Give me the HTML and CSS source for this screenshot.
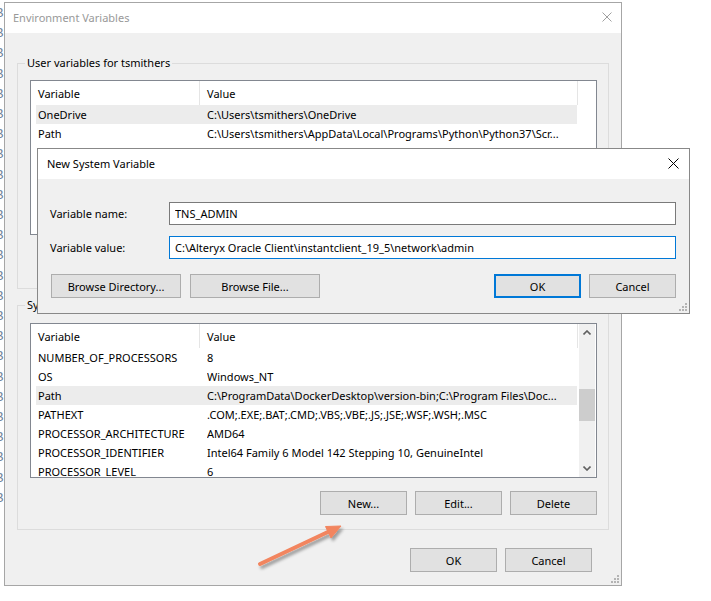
FILE: index.html
```html
<!DOCTYPE html>
<html lang="en">
<head>
    <meta charset="UTF-8">
    <meta name="viewport" content="width=device-width, initial-scale=1.0">
    <title>Environment Variables</title>
    <link rel="stylesheet" href="styles.css">
</head>
<body>

    <div class="desktop">
        <!-- edge of the window lying behind -->
        <div class="backdrop">
            <span>B</span><span>B</span><span>B</span><span>B</span><span>B</span>
            <span>B</span><span>B</span><span>B</span><span>B</span><span>B</span>
            <span>B</span><span>B</span><span>B</span><span>B</span><span>B</span>
            <span>B</span><span>B</span><span>B</span><span>B</span><span>B</span>
            <span>B</span><span>B</span><span>B</span><span>B</span><span>B</span>
        </div>

        <div class="window">
            <div class="titlebar">
                <span class="title">Environment Variables</span>
                <svg class="close inactive" width="10" height="10" viewBox="0 0 10 10">
                    <path d="M0.5 0.5 L9.5 9.5 M9.5 0.5 L0.5 9.5" />
                </svg>
            </div>

            <div class="window-body">
                <div class="group user-group">
                    <div class="group-label">User variables for tsmithers</div>
                    <div class="listbox">
                        <div class="list">
                            <div class="list-head">
                                <div class="head-cell name-col">Variable</div>
                                <div class="head-cell">Value</div>
                            </div>
                            <div class="row selected"><span>OneDrive</span><span>C:\Users\tsmithers\OneDrive</span></div>
                            <div class="row"><span>Path</span><span>C:\Users\tsmithers\AppData\Local\Programs\Python\Python37\Scr...</span></div>
                        </div>
                        <div class="scroll-blank"></div>
                    </div>
                </div>

                <div class="group sys-group">
                    <div class="group-label">System variables</div>
                    <div class="listbox">
                        <div class="list">
                            <div class="list-head">
                                <div class="head-cell name-col">Variable</div>
                                <div class="head-cell">Value</div>
                            </div>
                            <div class="row"><span>NUMBER_OF_PROCESSORS</span><span>8</span></div>
                            <div class="row"><span>OS</span><span>Windows_NT</span></div>
                            <div class="row selected"><span>Path</span><span>C:\ProgramData\DockerDesktop\version-bin;C:\Program Files\Doc...</span></div>
                            <div class="row"><span>PATHEXT</span><span>.COM;.EXE;.BAT;.CMD;.VBS;.VBE;.JS;.JSE;.WSF;.WSH;.MSC</span></div>
                            <div class="row"><span>PROCESSOR_ARCHITECTURE</span><span>AMD64</span></div>
                            <div class="row"><span>PROCESSOR_IDENTIFIER</span><span>Intel64 Family 6 Model 142 Stepping 10, GenuineIntel</span></div>
                            <div class="row"><span>PROCESSOR_LEVEL</span><span>6</span></div>
                        </div>
                        <div class="scrollbar">
                            <div class="scroll-btn">
                                <svg width="8" height="5" viewBox="0 0 8 5"><polyline points="0.5,4.5 4,1 7.5,4.5" /></svg>
                            </div>
                            <div class="scroll-track"><div class="thumb"></div></div>
                            <div class="scroll-btn">
                                <svg width="8" height="5" viewBox="0 0 8 5"><polyline points="0.5,0.5 4,4 7.5,0.5" /></svg>
                            </div>
                        </div>
                    </div>
                    <div class="button-row">
                        <button>New...</button>
                        <button>Edit...</button>
                        <button>Delete</button>
                    </div>
                </div>

                <div class="button-row footer">
                    <button>OK</button>
                    <button>Cancel</button>
                </div>
            </div>
            <svg class="grip" width="8" height="8" viewBox="0 0 8 8">
                <rect x="6" y="0" width="2" height="2" />
                <rect x="3" y="3" width="2" height="2" /><rect x="6" y="3" width="2" height="2" />
                <rect x="0" y="6" width="2" height="2" /><rect x="3" y="6" width="2" height="2" /><rect x="6" y="6" width="2" height="2" />
            </svg>
        </div>

        <!-- New System Variable dialog on top -->
        <div class="dialog">
            <div class="titlebar dialog-titlebar">
                <span class="dialog-title">New System Variable</span>
                <svg class="close" width="11" height="11" viewBox="0 0 11 11">
                    <path d="M0.5 0.5 L10.5 10.5 M10.5 0.5 L0.5 10.5" />
                </svg>
            </div>
            <div class="dialog-body">
                <div class="field-grid">
                    <label for="varName">Variable name:</label>
                    <input id="varName" type="text" value="TNS_ADMIN">
                    <label for="varValue">Variable value:</label>
                    <input id="varValue" class="focused" type="text" value="C:\Alteryx Oracle Client\instantclient_19_5\network\admin">
                </div>
                <div class="dialog-buttons">
                    <button class="wide">Browse Directory...</button>
                    <button class="wide">Browse File...</button>
                    <span class="spacer"></span>
                    <button class="default">OK</button>
                    <button>Cancel</button>
                </div>
            </div>
            <svg class="grip" width="8" height="8" viewBox="0 0 8 8">
                <rect x="6" y="0" width="2" height="2" />
                <rect x="3" y="3" width="2" height="2" /><rect x="6" y="3" width="2" height="2" />
                <rect x="0" y="6" width="2" height="2" /><rect x="3" y="6" width="2" height="2" /><rect x="6" y="6" width="2" height="2" />
            </svg>
        </div>

        <svg class="pointer" width="711" height="601" viewBox="0 0 711 601">
            <defs>
                <filter id="shadow" x="-20%" y="-20%" width="140%" height="140%">
                    <feDropShadow dx="2" dy="3" stdDeviation="1.6" flood-color="#000" flood-opacity="0.35" />
                </filter>
            </defs>
            <g filter="url(#shadow)" fill="#f2855f" stroke="#f2855f">
                <line x1="260" y1="564" x2="330" y2="531" stroke-width="4" stroke-linecap="round" />
                <polygon points="341,526 331,538 325.5,526.5" stroke-width="1" stroke-linejoin="round" />
            </g>
        </svg>
    </div>

</body>
</html>
```

FILE: styles.css
```css
* {
    box-sizing: border-box;
}
body {
    margin: 0;
    background: #fff;
    font-family: "Noto Sans", "Segoe UI", sans-serif;
    font-size: 11px;
    color: #000;
}
.desktop {
    position: relative;
    display: flex;
    align-items: flex-start;
    width: 711px;
    height: 601px;
    overflow: hidden;
}
.backdrop {
    width: 4px;
    overflow: hidden;
    padding-top: 3px;
    color: #6d7f98;
    font: 13px/20.2px "Liberation Sans", sans-serif;
}
.backdrop span {
    display: block;
    margin-left: -5px;
}

/* outer window */
.window {
    position: relative;
    margin-top: 2px;
    width: 618px;
    height: 584px;
    border: 1px solid #a6a6a6;
    background: #f0f0f0;
}
.titlebar {
    height: 30px;
    background: #fff;
    display: flex;
    align-items: center;
    justify-content: space-between;
    padding: 0 9px 2px 8px;
}
.title {
    color: #999;
}
.close path {
    stroke: #000;
    stroke-width: 1;
    fill: none;
}
.close.inactive path {
    stroke: #a0a0a0;
}
.window-body {
    padding: 30px 12px 0;
}

/* group boxes */
.group {
    border: 1px solid #dcdcdc;
    padding: 0 11px 0 12px;
}
.group-label {
    width: fit-content;
    margin: -8px 0 0 -5px;
    padding: 0 2px;
    line-height: 14px;
    background: #f0f0f0;
}
.user-group {
    height: 226px;
}
.user-group .listbox {
    margin-top: 10px;
}
.sys-group {
    height: 225px;
    margin-top: 16px;
}
.sys-group .listbox {
    margin-top: 11px;
}

/* list views */
.listbox {
    display: flex;
    height: 155px;
    border: 1px solid #828790;
    background: #fff;
    overflow: hidden;
}
.list {
    width: 547px;
    overflow: hidden;
}
.list-head {
    display: flex;
    height: 24px;
    border-right: 1px solid #e5e5e5;
}
.head-cell {
    display: flex;
    align-items: center;
    padding-left: 7px;
}
.head-cell.name-col {
    width: 169px;
    border-right: 1px solid #e5e5e5;
}
.row {
    display: grid;
    grid-template-columns: 169px 1fr;
    align-items: center;
    height: 19px;
    margin: 0 1px 0 5px;
    padding-left: 2px;
    white-space: nowrap;
}
.row span {
    overflow: hidden;
}
.row.selected {
    background: #ececec;
}
.scroll-blank {
    width: 16px;
    margin: 0 1px;
}
.scrollbar {
    display: flex;
    flex-direction: column;
    width: 16px;
    margin: 0 1px;
    background: #f0f0f0;
}
.scroll-btn {
    height: 17px;
    display: flex;
    align-items: center;
    justify-content: center;
}
.scroll-btn polyline {
    fill: none;
    stroke: #606060;
    stroke-width: 1.6;
}
.scroll-track {
    flex: 1;
}
.thumb {
    margin-top: 48px;
    height: 32px;
    background: #cdcdcd;
}

/* buttons */
button {
    height: 24px;
    width: 87px;
    padding: 0;
    background: #e1e1e1;
    border: 1px solid #adadad;
    font-family: inherit;
    font-size: 11px;
    color: #000;
}
.button-row {
    display: flex;
    justify-content: flex-end;
    gap: 8px;
}
.sys-group .button-row {
    margin-top: 13px;
}
.footer {
    margin-top: 18px;
    padding-right: 17px;
}
.grip {
    position: absolute;
    right: 2px;
    bottom: 2px;
    fill: #b4b4b4;
}

/* dialog */
.dialog {
    position: absolute;
    left: 37px;
    top: 148px;
    width: 653px;
    height: 166px;
    border: 1px solid #888;
    background: #f0f0f0;
}
.dialog-titlebar {
    padding: 0 10px 2px 9px;
}
.dialog-body {
    padding: 23px 13px 0 12px;
}
.field-grid {
    display: grid;
    grid-template-columns: 119px 1fr;
    grid-auto-rows: 23px;
    row-gap: 11px;
    align-items: center;
}
input {
    height: 23px;
    padding: 0 0 0 5px;
    border: 1px solid #7a7a7a;
    background: #fff;
    font-family: inherit;
    font-size: 11px;
    color: #000;
    outline: none;
}
input.focused {
    border-color: #0078d7;
}
.dialog-buttons {
    display: flex;
    margin: 15px 0 0 1px;
    gap: 8px;
}
.dialog-buttons button.wide {
    width: 130px;
}
.dialog-buttons button.wide + button.wide {
    margin-left: 1px;
}
.spacer {
    flex: 1;
}
button.default {
    border: 2px solid #0078d7;
}
.pointer {
    position: absolute;
    left: 0;
    top: 0;
    pointer-events: none;
}
```
